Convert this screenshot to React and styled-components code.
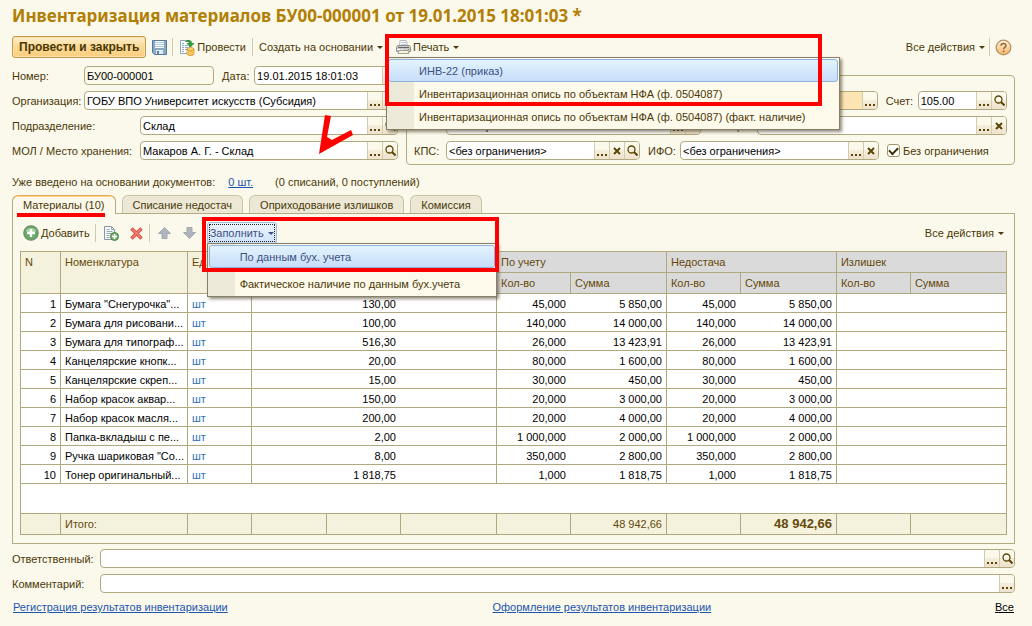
import React, { useState } from 'react';
import styled, { createGlobalStyle, css } from 'styled-components';

const GlobalStyle = createGlobalStyle`
  * {
    box-sizing: border-box;
  }

  body {
    margin: 0;
    background: #fbf9eb;
    color: #4a3808;
    font-family: "Liberation Sans", Arial, sans-serif;
    font-size: 11px;
    line-height: 16px;
  }

  button, input {
    font: inherit;
    color: inherit;
  }
`;

const Page = styled.main`
  min-width: 900px;
  padding: 4px 17px 0 12px;
`;

const Title = styled.h1`
  margin: 0;
  color: #b27f06;
  font-family: "Noto Sans", "Open Sans", sans-serif;
  font-size: 17px;
  font-weight: 700;
  line-height: 24px;
`;

const Toolbar = styled.div`
  display: flex;
  align-items: center;
  height: 22px;
  margin-top: ${(props) => props.$top || 0}px;
  white-space: nowrap;
`;

const Separator = styled.span`
  width: 1px;
  height: 18px;
  margin: 0 ${(props) => props.$right || 4}px 0 ${(props) => props.$left || 4}px;
  background: #cfcab2;
`;

const Gap = styled.span`
  width: ${(props) => props.$width}px;
`;

const PrimaryButton = styled.button`
  height: 22px;
  padding: 0 6px;
  border: 1px solid #c39a4c;
  border-radius: 3px;
  background: linear-gradient(#fff0cf, #fbd894 50%, #f9cf80);
  box-shadow: inset 0 0 0 1px #fbe0aa;
  font-size: 12px;
  font-weight: 700;
  line-height: 18px;
`;

const ToolButton = styled.button`
  display: flex;
  align-items: center;
  gap: 2px;
  height: 22px;
  padding: 0 2px;
  border: 1px solid transparent;
  border-radius: 3px;
  background: transparent;
  white-space: nowrap;

  ${(props) => props.$open && css`
    border-color: #9dbde3;
    background: linear-gradient(#edf5fc, #cfe3fb);
    color: #3c5080;
    outline: 1px dotted #222;
    outline-offset: -3px;
  `}
`;

const Caret = styled.span`
  width: 0;
  height: 0;
  margin-left: 2px;
  border: 3px solid transparent;
  border-top-color: currentColor;
  border-bottom: 0;
`;

const Push = styled.div`
  display: flex;
  align-items: center;
  margin-left: auto;
`;

const MenuAnchor = styled.div`
  position: relative;
  display: flex;
  align-items: center;
`;

const Menu = styled.div`
  position: absolute;
  z-index: 2;
  top: 21px;
  left: 0;
  display: flex;
  flex-direction: column;
  gap: ${(props) => props.$gap}px;
  width: ${(props) => props.$width}px;
  padding: 1px;
  border: 1px solid #857f6c;
  background: linear-gradient(90deg, #edead9 27px, #fdfaeb 27px);
  box-shadow: 2px 2px 3px rgba(60, 50, 20, 0.55);
`;

const MenuItem = styled.button`
  height: 23px;
  padding: 0 0 0 30px;
  border: 1px solid transparent;
  border-radius: 3px;
  background: transparent;
  text-align: left;
  white-space: nowrap;

  ${(props) => props.$active && css`
    border-color: #8fb2df;
    background: linear-gradient(#e3f3fb, #d5e9fb 50%, #c7ddfb);
    color: #3c5080;
  `}
`;

const RedFrame = styled.div`
  position: absolute;
  z-index: 3;
  top: ${(props) => props.$top}px;
  left: ${(props) => props.$left}px;
  width: ${(props) => props.$width}px;
  height: ${(props) => props.$height}px;
  border: 4px solid #fe0000;
  pointer-events: none;
`;

const Form = styled.div`
  display: grid;
  grid-template-columns: minmax(0, 386fr) minmax(0, 609fr);
  gap: 8px;
  margin-top: 8px;
`;

const Column = styled.div`
  position: relative;
  display: flex;
  flex-direction: column;
  gap: 6px;
`;

const Group = styled(Column)`
  margin-top: 9px;
  padding: 15px 7px 4px;
  border: 1px solid #b3ac83;
  border-radius: 4px;
`;

const Row = styled.div`
  display: flex;
  align-items: center;
`;

const Label = styled.label`
  flex: none;
  width: ${(props) => props.$width}px;
  margin-left: ${(props) => props.$left || 0}px;
  white-space: nowrap;
`;

const FieldBox = styled.div`
  display: flex;
  flex: ${(props) => props.$flex || 1} 1 0;
  min-width: 0;
  height: 19px;
  overflow: hidden;
  border: 1px solid #b0a980;
  border-radius: 4px;
  background: ${(props) => props.$background || '#fff'};

  input {
    flex: 1;
    min-width: 0;
    padding: 0 2px;
    border: 0;
    outline: 0;
    background: transparent;
    color: #000;
  }
`;

const FieldButton = styled.button`
  display: flex;
  align-items: center;
  justify-content: center;
  flex: none;
  width: 15px;
  padding: 0;
  border: 0;
  border-left: 1px solid #d3cdae;
  background: linear-gradient(#fbf9eb 45%, #f3eeda 50%, #efe2cd);
  color: #5c4505;
`;

const CheckLabel = styled.label`
  display: flex;
  align-items: center;
  gap: 3px;
  flex: none;
  width: 120px;
  margin-left: 8px;
  white-space: nowrap;

  input {
    display: grid;
    place-items: center;
    width: 13px;
    height: 13px;
    margin: 0;
    appearance: none;
    border: 1px solid #9d956a;
    border-radius: 3px;
    background: #fff;
  }

  input:checked::before {
    content: "";
    width: 7px;
    height: 4px;
    border: solid #3b2d05;
    border-width: 0 0 2px 2px;
    transform: translateY(-1px) rotate(-45deg);
  }
`;

const BasisLine = styled.p`
  display: flex;
  margin: 9px 0 5px;

  a {
    margin: 0 22px 0 13px;
  }
`;

const Link = styled.a`
  color: ${(props) => (props.$dark ? '#000' : '#1c55b0')};
`;

const Tabs = styled.div`
  position: relative;
  z-index: 1;
  display: flex;
  gap: 6px;
  height: 19px;
`;

const Tab = styled.button`
  height: 18px;
  padding: 0 10px;
  border: 1px solid #c9c4a5;
  border-bottom: 0;
  border-radius: 6px 6px 0 0;
  background: #ece8d5;
  line-height: 16px;

  ${(props) => props.$active && css`
    height: 19px;
    border-color: #b3ac83;
    border-top-color: #e3a94c;
    background: #fbf9eb;
    box-shadow: inset 0 1px 0 #fbd68f;
  `}
`;

const TabUnderline = styled.span`
  position: absolute;
  top: 18px;
  left: 5px;
  width: 88px;
  height: 4px;
  background: #fe0000;
`;

const Panel = styled.section`
  margin-top: -1px;
  padding: 8px 7px;
  border: 1px solid #b3ac83;
`;

const Table = styled.table`
  width: 100%;
  margin-top: 7px;
  table-layout: fixed;
  border-collapse: separate;
  border-spacing: 0;
  border-top: 1px solid #b0a980;
  border-left: 1px solid #b0a980;
  background: #fff;
`;

const Th = styled.th`
  height: 21px;
  padding: ${(props) => (props.$tall ? 2 : 0)}px 4px 0;
  overflow: hidden;
  border-right: 1px solid #b0a980;
  border-bottom: 1px solid #b0a980;
  background: ${(props) => (props.$gray ? '#dadada' : '#f4f1dd')};
  color: #65490b;
  font-weight: 400;
  text-align: left;
  vertical-align: ${(props) => (props.$tall ? 'top' : 'middle')};
  white-space: nowrap;
`;

const Td = styled.td`
  height: ${(props) => props.$height || 19}px;
  padding: 2px ${(props) => (props.$open ? 5 : 4)}px 0 4px;
  border-right: ${(props) => (props.$open ? 0 : 1)}px solid #b0a980;
  border-bottom: 1px solid #b0a980;
  color: ${(props) => props.$color || '#000'};
  text-align: ${(props) => props.$align || 'left'};
  white-space: nowrap;
`;

const FootTd = styled(Td)`
  padding-top: 0;
  background: #f4f1dd;
  color: #65490b;
  font-size: ${(props) => (props.$bold ? 13 : 11)}px;
  font-weight: ${(props) => (props.$bold ? 700 : 400)};
`;

const Footer = styled.div`
  display: flex;
  flex-direction: column;
  gap: 6px;
  margin-top: 5px;
`;

const Links = styled.nav`
  display: grid;
  grid-template-columns: 480fr 503fr auto;
  margin-top: 6px;
  padding: 0 1px;
`;

const RedArrow = styled.svg`
  position: absolute;
  z-index: 3;
  top: 49px;
  left: 306px;
  pointer-events: none;
`;

const SaveIcon = () => (
  <svg width="15" height="15" viewBox="0 0 15 15">
    <path d="M.5.5h14v14h-12l-2-2z" fill="#8aa9c2" stroke="#557a98" />
    <path d="M3 1h9v7H3z" fill="#f4f9fc" />
    <path d="M3 2.500h9M3 4.500h9M3 6.500h9" stroke="#b5cddd" />
    <path d="M4 10h7v4H4z" fill="#e2ebf1" />
    <path d="M5 11h2v3H5z" fill="#5b7f9c" />
  </svg>
);

const PostIcon = () => (
  <svg width="16" height="17" viewBox="0 0 16 17">
    <path d="M1.500 1.500h9v13h-9z" fill="#fbfdfe" stroke="#8fa5b6" />
    <path d="M3 4.500h2M3 6.500h2M3 8.500h2M3 10.500h2M3 12.500h2M6 6.500h3M6 8.500h3M6 10.500h2" stroke="#86a8c0" />
    <path d="M6.500 2.500C10 .5 13 1.500 12.500 4.500h2.500l-3.500 3.500L8 4.500h2.500C10.500 3 9 2.300 6.500 2.500z" fill="#2fa33a" stroke="#177a25" strokeWidth=".6" />
    <path d="M8 10v5c1 2 6 2 7 0v-5z" fill="#f2b139" stroke="#c98a2a" strokeWidth=".7" />
    <path d="M8 12c2 1.500 5 1.500 7 0M8 14c2 1.500 5 1.500 7 0" fill="none" stroke="#fbe08b" strokeWidth=".8" />
    <ellipse cx="11.500" cy="10" rx="3.500" ry="1.500" fill="#ffd76e" stroke="#c98a2a" strokeWidth=".7" />
  </svg>
);

const PrintIcon = () => (
  <svg width="15" height="14" viewBox="0 0 15 14">
    <path d="M4 .5h6l1.500 5h-8z" fill="#fff" stroke="#b5b8ba" />
    <path d="M5 2.500h5M5 4.500h5" stroke="#b9cbd9" />
    <path d="M1.500 5.500h12l1 2v4h-14v-4z" fill="#c9c9c7" stroke="#929292" />
    <path d="M2 7.500h11" stroke="#666" />
    <path d="M1 9.500h3M5 9.500h2" stroke="#f2f2f2" />
    <path d="M12 9h1v1h-1z" fill="#4b9b45" />
    <path d="M3 10.500h9l1 3H2z" fill="#f6f1d8" stroke="#a5a294" />
  </svg>
);

const HelpIcon = () => (
  <svg width="17" height="17" viewBox="0 0 17 17">
    <defs>
      <linearGradient id="help" x1="0" y1="0" x2="0" y2="1">
        <stop offset="0" stopColor="#fff3dc" />
        <stop offset="1" stopColor="#f3b568" />
      </linearGradient>
    </defs>
    <circle cx="8.500" cy="8.500" r="7.300" fill="url(#help)" stroke="#b5946a" strokeWidth="1.300" />
    <path d="M6 6.800C6 3.800 11 3.900 11 6.600 11 8.400 8.600 8.300 8.600 10.200M8.600 11.600v1.600" fill="none" stroke="#94693a" strokeWidth="1.500" />
  </svg>
);

const AddIcon = () => (
  <svg width="16" height="16" viewBox="0 0 16 16">
    <circle cx="8" cy="8" r="7.200" fill="#67a968" stroke="#6f8a6d" strokeWidth="1.200" />
    <path d="M2.500 6a6 5 0 0 1 11 0 8 6 0 0 1-11 0z" fill="#a5d0a0" />
    <path d="M8 4v8M4 8h8" stroke="#fff" strokeWidth="2.400" />
  </svg>
);

const CopyIcon = () => (
  <svg width="16" height="16" viewBox="0 0 16 16">
    <path d="M1.500 1.500h7l3 3v10h-10z" fill="#f5f8fa" stroke="#8496a3" />
    <path d="M8.500 1.500v3h3M3.500 4.500h3M3.500 6.500h6M3.500 8.500h5M3.500 10.500h3M3.500 12.500h3" fill="none" stroke="#94aab9" />
    <circle cx="11.500" cy="11.500" r="4" fill="#6fb36c" stroke="#4c7f4c" />
    <path d="M11.500 9v5M9 11.500h5" stroke="#fff" strokeWidth="1.600" />
  </svg>
);

const DeleteIcon = () => (
  <svg width="13" height="13" viewBox="0 0 13 13">
    <path d="M1.500 1.500l10 10M11.500 1.500l-10 10" stroke="#d0453c" strokeWidth="3.400" />
    <path d="M2 2l9 9M11 2l-9 9" stroke="#f3786c" strokeWidth="2" />
  </svg>
);

const ArrowIcon = ({ down }) => (
  <svg width="13" height="12" viewBox="0 0 13 12">
    <path
      d={down ? 'M4 .5h5v5h3.500l-6 6-6-6H4z' : 'M4 11.500h5v-5h3.500l-6-6-6 6H4z'}
      fill="#aeb5bd"
      stroke="#a0a8b0"
    />
  </svg>
);

const glyphs = {
  dots: (
    <svg width="10" height="16" viewBox="0 0 10 16">
      <path d="M0 11h2v2H0zM4 11h2v2H4zM8 11h2v2H8z" fill="currentColor" />
    </svg>
  ),
  clear: (
    <svg width="8" height="8" viewBox="0 0 8 8">
      <path d="M1 1l6 6M7 1L1 7" stroke="currentColor" strokeWidth="2" />
    </svg>
  ),
  search: (
    <svg width="11" height="11" viewBox="0 0 11 11">
      <circle cx="4.500" cy="4.500" r="3.500" fill="none" stroke="currentColor" strokeWidth="1.300" />
      <path d="M7 7l3.500 3.500" stroke="currentColor" strokeWidth="2" />
    </svg>
  ),
};

const glyphNames = { dots: 'Выбрать', clear: 'Очистить', search: 'Открыть' };

const Field = ({ id, value = '', buttons = [], flex, background, readOnly }) => (
  <FieldBox $flex={flex} $background={background}>
    <input id={id} defaultValue={value} readOnly={readOnly} />
    {buttons.map((name) => (
      <FieldButton key={name} type="button" aria-label={glyphNames[name]}>
        {glyphs[name]}
      </FieldButton>
    ))}
  </FieldBox>
);

const columnWidths = [40, 127, 64, 75, 74, 96, 74, 96, 74, 96, 74, 96];

const items = [
  ['Бумага "Снегурочка"...', '130,00', '45,000', '5 850,00'],
  ['Бумага для рисовани...', '100,00', '140,000', '14 000,00'],
  ['Бумага для типограф...', '516,30', '26,000', '13 423,91'],
  ['Канцелярские кнопк...', '20,00', '80,000', '1 600,00'],
  ['Канцелярские скреп...', '15,00', '30,000', '450,00'],
  ['Набор красок аквар...', '150,00', '20,000', '3 000,00'],
  ['Набор красок масля...', '200,00', '20,000', '4 000,00'],
  ['Папка-вкладыш с пе...', '2,00', '1 000,000', '2 000,00'],
  ['Ручка шариковая "Со...', '8,00', '350,000', '2 800,00'],
  ['Тонер оригинальный...', '1 818,75', '1,000', '1 818,75'],
];

const tabs = ['Материалы (10)', 'Списание недостач', 'Оприходование излишков', 'Комиссия'];

const ItemsTable = () => (
  <Table>
    <colgroup>
      {columnWidths.map((width, index) => (
        <col key={index} style={{ width: `${(width / 986) * 100}%` }} />
      ))}
    </colgroup>
    <thead>
      <tr>
        <Th rowSpan={2} $tall>N</Th>
        <Th rowSpan={2} $tall>Номенклатура</Th>
        <Th rowSpan={2} $tall>Ед.</Th>
        <Th rowSpan={2} colSpan={3} $tall />
        <Th colSpan={2} $gray>По учету</Th>
        <Th colSpan={2} $gray>Недостача</Th>
        <Th colSpan={2} $gray>Излишек</Th>
      </tr>
      <tr>
        {[0, 1, 2].map((group) => (
          <React.Fragment key={group}>
            <Th $gray>Кол-во</Th>
            <Th $gray>Сумма</Th>
          </React.Fragment>
        ))}
      </tr>
    </thead>
    <tbody>
      {items.map(([name, price, count, sum], index) => (
        <tr key={name}>
          <Td $align="right">{index + 1}</Td>
          <Td>{name}</Td>
          <Td $color="#2f70b5">шт</Td>
          <Td colSpan={2} $align="right" $open>{price}</Td>
          <Td />
          <Td $align="right" $open>{count}</Td>
          <Td $align="right">{sum}</Td>
          <Td $align="right" $open>{count}</Td>
          <Td $align="right">{sum}</Td>
          <Td colSpan={2} />
        </tr>
      ))}
      <tr>
        <Td colSpan={12} $height={30} />
      </tr>
    </tbody>
    <tfoot>
      <tr>
        <FootTd $height={21} />
        <FootTd>Итого:</FootTd>
        <FootTd />
        <FootTd />
        <FootTd />
        <FootTd />
        <FootTd />
        <FootTd $align="right">48 942,66</FootTd>
        <FootTd />
        <FootTd $align="right" $bold>48 942,66</FootTd>
        <FootTd />
        <FootTd />
      </tr>
    </tfoot>
  </Table>
);

const App = () => {
  const [activeTab, setActiveTab] = useState(0);

  return (
    <>
      <GlobalStyle />
      <Page>
        <Title>Инвентаризация материалов БУ00-000001 от 19.01.2015 18:01:03 *</Title>

        <Toolbar $top={8}>
          <PrimaryButton type="button">Провести и закрыть</PrimaryButton>
          <Gap $width={3} />
          <ToolButton type="button" aria-label="Записать"><SaveIcon /></ToolButton>
          <Separator $left={2} $right={3} />
          <ToolButton type="button"><PostIcon />Провести</ToolButton>
          <Separator $left={3} $right={3} />
          <ToolButton type="button">Создать на основании<Caret /></ToolButton>
          <MenuAnchor>
            <Separator $left={2} $right={4} />
            <ToolButton type="button"><PrintIcon />Печать<Caret /></ToolButton>
            <Menu $width={454} $gap={0}>
              <MenuItem type="button" $active>ИНВ-22 (приказ)</MenuItem>
              <MenuItem type="button">Инвентаризационная опись по объектам НФА (ф. 0504087)</MenuItem>
              <MenuItem type="button">Инвентаризационная опись по объектам НФА (ф. 0504087) (факт. наличие)</MenuItem>
            </Menu>
            <RedFrame $top={-2} $left={-1} $width={437} $height={72} />
          </MenuAnchor>
          <Push>
            <ToolButton type="button">Все действия<Caret /></ToolButton>
            <Separator $left={1} $right={2} />
            <ToolButton type="button" aria-label="Справка"><HelpIcon /></ToolButton>
          </Push>
        </Toolbar>

        <Form>
          <Column>
            <Row>
              <Label htmlFor="number" $width={72}>Номер:</Label>
              <Field id="number" value="БУ00-000001" background="#fbf9eb" flex={130} readOnly />
              <Label htmlFor="date" $width={32} $left={8}>Дата:</Label>
              <Field id="date" value="19.01.2015 18:01:03" buttons={['dots']} flex={144} />
            </Row>
            <Row>
              <Label htmlFor="org" $width={72}>Организация:</Label>
              <Field id="org" value="ГОБУ ВПО Университет искусств (Субсидия)" buttons={['dots', 'search']} />
            </Row>
            <Row>
              <Label htmlFor="department" $width={128}>Подразделение:</Label>
              <Field id="department" value="Склад" buttons={['dots', 'search']} />
            </Row>
            <Row>
              <Label htmlFor="keeper" $width={128}>МОЛ / Место хранения:</Label>
              <Field id="keeper" value="Макаров А. Г. - Склад" buttons={['dots', 'search']} />
            </Row>
            <RedArrow width="36" height="40" viewBox="0 0 36 40">
              <path d="M7 0l6 1-4 21 5 3 19-10 2 5L1 39z" fill="#fe0000" />
            </RedArrow>
          </Column>

          <Group>
            <Row>
              <Label $width={32} />
              <Field id="kind" background="#fde5b3" buttons={['dots']} flex={433} />
              <Label htmlFor="account" $width={32} $left={8}>Счет:</Label>
              <Field id="account" value="105.00" buttons={['dots', 'search']} flex={88} />
            </Row>
            <Row>
              <Label htmlFor="kfo" $width={32}>КФО:</Label>
              <Field id="kfo" value="<без ограничения>" buttons={['dots', 'clear']} flex={255} />
              <Label htmlFor="priceKind" $width={46} $left={10}>Тип цен:</Label>
              <Field id="priceKind" value="<балансовая>" buttons={['dots', 'clear']} flex={250} />
            </Row>
            <Row>
              <Label htmlFor="kps" $width={32}>КПС:</Label>
              <Field id="kps" value="<без ограничения>" buttons={['dots', 'clear', 'search']} flex={194} />
              <Label htmlFor="ifo" $width={32} $left={8}>ИФО:</Label>
              <Field id="ifo" value="<без ограничения>" buttons={['dots', 'clear']} flex={199} />
              <CheckLabel>
                <input type="checkbox" defaultChecked />
                Без ограничения
              </CheckLabel>
            </Row>
          </Group>
        </Form>

        <BasisLine>
          Уже введено на основании документов:
          <Link href="#basis">0 шт.</Link>
          (0 списаний, 0 поступлений)
        </BasisLine>

        <Tabs>
          {tabs.map((tab, index) => (
            <Tab
              key={tab}
              type="button"
              $active={index === activeTab}
              onClick={() => setActiveTab(index)}
            >
              {tab}
            </Tab>
          ))}
          <TabUnderline />
        </Tabs>

        <Panel>
          <Toolbar>
            <ToolButton type="button"><AddIcon />Добавить</ToolButton>
            <Separator $left={2} $right={4} />
            <ToolButton type="button" aria-label="Скопировать"><CopyIcon /></ToolButton>
            <Gap $width={5} />
            <ToolButton type="button" aria-label="Удалить"><DeleteIcon /></ToolButton>
            <Separator $left={3} $right={5} />
            <ToolButton type="button" aria-label="Вверх"><ArrowIcon /></ToolButton>
            <Gap $width={6} />
            <ToolButton type="button" aria-label="Вниз"><ArrowIcon down /></ToolButton>
            <Separator $left={3} $right={4} />
            <MenuAnchor>
              <ToolButton type="button" $open>Заполнить<Caret /></ToolButton>
              <Menu $width={290} $gap={4}>
                <MenuItem type="button" $active>По данным бух. учета</MenuItem>
                <MenuItem type="button">Фактическое наличие по данным бух.учета</MenuItem>
              </Menu>
              <RedFrame $top={-5} $left={-5} $width={297} $height={55} />
            </MenuAnchor>
            <Push>
              <ToolButton type="button">Все действия<Caret /></ToolButton>
            </Push>
          </Toolbar>
          <ItemsTable />
        </Panel>

        <Footer>
          <Row>
            <Label htmlFor="responsible" $width={88}>Ответственный:</Label>
            <Field id="responsible" buttons={['dots', 'search']} />
          </Row>
          <Row>
            <Label htmlFor="comment" $width={88}>Комментарий:</Label>
            <Field id="comment" buttons={['dots']} />
          </Row>
        </Footer>

        <Links>
          <Link href="#registration">Регистрация результатов инвентаризации</Link>
          <Link href="#documents">Оформление результатов инвентаризации</Link>
          <Link href="#all" $dark>Все</Link>
        </Links>
      </Page>
    </>
  );
};

export default App;
